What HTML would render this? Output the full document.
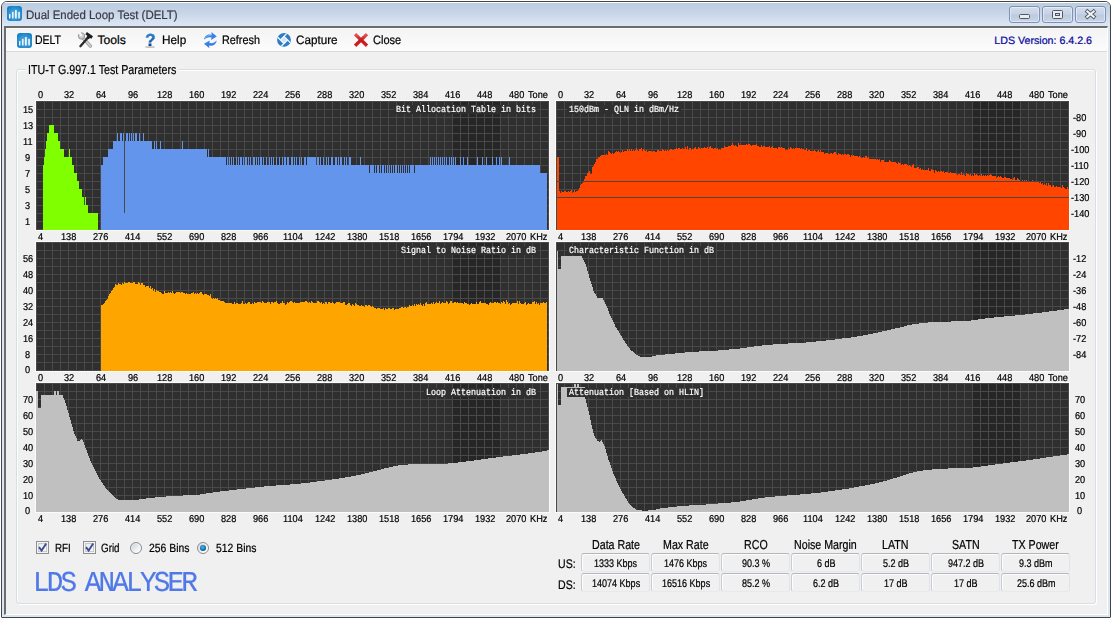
<!DOCTYPE html>
<html lang="en"><head><meta charset="utf-8"><title>Dual Ended Loop Test (DELT)</title>
<style>
html,body{margin:0;padding:0;background:#fff;}
body{width:1112px;height:620px;position:relative;overflow:hidden;font-family:"Liberation Sans",sans-serif;}
.t{position:absolute;white-space:nowrap;transform-origin:0 0;text-rendering:geometricPrecision;-webkit-text-stroke:0.22px;}
.s{font-family:"Liberation Sans",sans-serif;}
.m{font-family:"Liberation Mono",monospace;}
.abs{position:absolute;}
#win{position:absolute;left:1px;top:1px;width:1108px;height:615px;border:1px solid #444;border-radius:6px 6px 1px 1px;
 background:#dbe6f4;overflow:hidden;}
#titlebar{position:absolute;left:0;top:0;width:1108px;height:25px;
 background:linear-gradient(#ffffff 0,#ffffff 1px,#bccde0 1px,#c4d3e5 9px,#d6e2f1 20px,#dce7f5 24px);}
#inner{position:absolute;left:2px;top:24px;width:1101px;height:586px;background:#f0f0f0;
 border-left:2px solid #6d6d6d;border-top:2px solid #6b6b6b;border-right:1px solid #fff;border-bottom:1px solid #fff;}
#toolbar{position:absolute;left:6px;top:28px;width:1101px;height:23px;background:linear-gradient(#ffffff 0,#f4f4f4 1px,#f6f6f6 8px,#fcfcfc 22px);border-bottom:1px solid #dadada;}
#group{position:absolute;left:16px;top:69px;width:1078px;height:533px;border:1px solid #d5dfe5;border-radius:3px;box-shadow:inset 1px 1px 0 #fff,1px 1px 0 #fff;}
.wb{position:absolute;top:6px;height:15px;width:29px;border:1px solid #8190b2;border-radius:3px;
 background:linear-gradient(#d3deec 0,#c6d3e5 48%,#bccadf 52%,#c7d5e7 100%);box-shadow:inset 0 0 0 1px rgba(255,255,255,.45);}
.cell{position:absolute;width:67px;height:17px;border:1px solid;border-color:#b3b6bc #e0e3e8 #e6e9ee #c9cdd5;border-radius:3px;background:#f0f0f0;box-shadow:inset 1px 1px 0 #fdfdfd;}
.cb{position:absolute;width:11px;height:11px;border:1px solid #8e8f8f;background:linear-gradient(135deg,#dfe2e6,#f6f6f6 60%,#fff);box-shadow:inset 0 0 0 1px #f4f4f4, inset 0 0 0 2px #c6cad0;}
.rb{position:absolute;width:10px;height:10px;border:1px solid #8a8b8c;border-radius:50%;background:linear-gradient(135deg,#cfd3d8 10%,#eceef0 55%,#ffffff 90%);box-shadow:inset 0 0 0 1px rgba(255,255,255,.5);}
</style></head><body>

<div id="win"><div id="titlebar"></div><div id="inner"></div></div>
<div id="toolbar"></div>
<div id="group"></div>
<div class="abs" style="left:26px;top:62px;width:153px;height:16px;background:#f0f0f0"></div>
<div class="wb" style="left:1009px"></div>
<div class="wb" style="left:1042px"></div>
<div class="wb" style="left:1075px"></div>
<svg class="abs" style="left:6.8px;top:6.4px" width="15" height="15" viewBox="0 0 15 15">
<defs><radialGradient id="ig1" cx="50%" cy="55%" r="60%"><stop offset="0" stop-color="#62b2e4"/><stop offset="1" stop-color="#1280c6"/></radialGradient></defs>
<rect x="0" y="0" width="15" height="15" rx="3.2" fill="url(#ig1)"/>
<rect x="2" y="7.9" width="1.4" height="4.7" rx=".6" fill="#fff"/><rect x="5.1" y="5.8" width="1.4" height="6.8" rx=".6" fill="#fff"/>
<rect x="8.1" y="3.9" width="1.6" height="8.7" rx=".6" fill="#fff"/><rect x="11.3" y="5.8" width="1.5" height="6.8" rx=".6" fill="#fff"/></svg>
<svg class="abs" style="left:16.7px;top:32.5px" width="15" height="15" viewBox="0 0 15 15">
<defs><radialGradient id="ig2" cx="50%" cy="55%" r="60%"><stop offset="0" stop-color="#62b2e4"/><stop offset="1" stop-color="#1280c6"/></radialGradient></defs>
<rect x="0" y="0" width="15" height="15" rx="3.2" fill="url(#ig2)"/>
<rect x="2" y="7.9" width="1.4" height="4.7" rx=".6" fill="#fff"/><rect x="5.1" y="5.8" width="1.4" height="6.8" rx=".6" fill="#fff"/>
<rect x="8.1" y="3.9" width="1.6" height="8.7" rx=".6" fill="#fff"/><rect x="11.3" y="5.8" width="1.5" height="6.8" rx=".6" fill="#fff"/></svg>
<div class="t s" style="left:26.00px;top:6px;font-size:12.2px;line-height:18px;color:#3a3a44;transform:scaleX(0.9392);">Dual Ended Loop Test (DELT)</div>
<svg class="abs" style="left:1009px;top:6px" width="100" height="18" viewBox="0 0 100 18" shape-rendering="geometricPrecision">
<rect x="10.5" y="8.5" width="10" height="4" rx="1" fill="#ececec" stroke="#4f5868" stroke-width="1"/>
<rect x="43.5" y="4.5" width="10" height="8" rx="1" fill="#ececec" stroke="#4f5868" stroke-width="1"/>
<rect x="46.5" y="7.5" width="4" height="2" fill="#cfdbea" stroke="#4f5868" stroke-width="1"/>
<g fill="none" stroke-linecap="butt"><path d="M76.9 4.2 L86.1 12 M86.1 4.2 L76.9 12" stroke="#4f5868" stroke-width="3.9"/><path d="M77.5 4.7 L85.5 11.5 M85.5 4.7 L77.5 11.5" stroke="#f4f4f4" stroke-width="2.1"/></g>
</svg>
<svg class="abs" style="left:77px;top:31px" width="17" height="17" viewBox="0 0 17 17">
<path d="M5.6 6.4 L13.4 15.1" stroke="#8d8d8d" stroke-width="3.3" stroke-linecap="round"/>
<path d="M5.6 6.4 L13.4 15.1" stroke="#cfcfcf" stroke-width="2.1" stroke-linecap="round"/>
<circle cx="4.5" cy="5" r="3.2" fill="#c9c9c9" stroke="#8d8d8d" stroke-width=".8"/>
<path d="M4.6 5.2 L2.0 0.6" stroke="#f6f6f6" stroke-width="2.3"/>
<path d="M3.4 15.2 l8.7 -10" stroke="#2a2a2a" stroke-width="2.3" stroke-linecap="round"/>
<path d="M9.9 1.0 l6.1 4.3 -1.6 2.5 -1.5 -.7 -1.1 1.2 -2.4 -1.9 1 -1.3 -2 -1.9z" fill="#1f1f1f"/>
</svg>
<div class="t s" style="left:145.00px;top:28px;font-size:17.5px;line-height:24px;color:#1c62b8;font-weight:bold;background:linear-gradient(#2a86d6 25%,#1a5fb4 55%,#12357e 80%);-webkit-background-clip:text;background-clip:text;-webkit-text-fill-color:transparent;-webkit-text-stroke:0.2px #1e62b8;">?</div>
<div class="abs" style="left:145px;top:45.6px;width:10px;height:2.4px;border-radius:50%;background:rgba(60,60,60,.28);filter:blur(.6px)"></div>
<svg class="abs" style="left:203px;top:31px" width="15" height="18" viewBox="0 0 15 18">
<path d="M1.0 8.6 C1.6 4.2 5.8 2.6 8.8 3.8 L8.4 0.9 13.8 5.6 8.0 9.0 8.5 6.6 C5.8 5.6 3.2 6.6 1.0 8.6z" fill="#3681e8"/>
<path d="M13.8 9.6 C13.0 14.2 8.8 15.6 6.0 14.4 L6.4 17.2 1.0 12.8 6.8 9.4 6.3 11.8 C8.8 12.8 11.6 11.8 13.8 9.6z" fill="#3681e8"/>
<path d="M2.2 7 C3.4 4.6 6.4 4 8.8 4.8" stroke="#7fb4f6" stroke-width=".9" fill="none"/>
</svg>
<svg class="abs" style="left:276px;top:32px" width="16" height="16" viewBox="0 0 16 16">
<defs><clipPath id="cc"><circle cx="8" cy="7.9" r="6.9"/></clipPath></defs>
<circle cx="8" cy="7.9" r="7.5" fill="#f7f8fa"/>
<circle cx="8" cy="7.9" r="6.9" fill="#2c7cc6"/>
<path d="M8 4.3 L11.6 7.9 8 11.5 4.4 7.9z" fill="#cbe6fb"/>
<g stroke="#f3f5f8" stroke-width="1.3" clip-path="url(#cc)" stroke-linecap="butt"><path d="M4.2 8.1 L12.4 -0.1"/><path d="M7.8 4.1 L15.8 12.1"/><path d="M11.8 7.7 L3.4 16.1"/><path d="M8.2 11.7 L0.2 3.7"/></g>
</svg>
<svg class="abs" style="left:353px;top:32px" width="16" height="16" viewBox="0 0 16 16">
<defs><linearGradient id="rx" x1="0" y1="0" x2="0" y2="1"><stop offset="0" stop-color="#e45c5c"/><stop offset=".5" stop-color="#c51a1a"/><stop offset="1" stop-color="#d61c1c"/></linearGradient></defs>
<g stroke="url(#rx)" stroke-width="3.3" fill="none"><path d="M2.07 2.07 L14.03 13.73"/><path d="M14.03 2.07 L2.07 13.73"/></g>
</svg>
<div class="t s" style="left:34.90px;top:31px;font-size:12.2px;line-height:18px;color:#000;transform:scaleX(0.8587);">DELT</div>
<div class="t s" style="left:97.40px;top:31px;font-size:12.2px;line-height:18px;color:#000;">Tools</div>
<div class="t s" style="left:161.60px;top:31px;font-size:12.2px;line-height:18px;color:#000;transform:scaleX(0.9685);">Help</div>
<div class="t s" style="left:221.80px;top:31px;font-size:12.2px;line-height:18px;color:#000;transform:scaleX(0.8896);">Refresh</div>
<div class="t s" style="left:295.50px;top:31px;font-size:12.2px;line-height:18px;color:#000;transform:scaleX(0.9585);">Capture</div>
<div class="t s" style="left:372.90px;top:31px;font-size:12.2px;line-height:18px;color:#000;transform:scaleX(0.9041);">Close</div>
<div class="t s" style="left:994.30px;top:33px;font-size:10.67px;line-height:16px;color:#0808a0;">LDS Version: 6.4.2.6</div>
<div class="t s" style="left:28.40px;top:60px;font-size:13px;line-height:19px;color:#000;transform:scaleX(0.8200);">ITU-T G.997.1 Test Parameters</div>
<svg class="abs" style="left:0;top:0" width="1112" height="620" viewBox="0 0 1112 620" shape-rendering="crispEdges">
<defs><pattern id="grid" width="8" height="8" patternUnits="userSpaceOnUse"><rect width="8" height="8" fill="none"/><rect width="1" height="8" fill="#494949"/><rect width="8" height="1" fill="#494949"/></pattern></defs>
<rect x="35" y="100" width="515" height="131" fill="#fbfbfb"/>
<rect x="36" y="101" width="513" height="129" fill="#2f2f2f"/>
<rect x="453" y="101" width="47" height="129" fill="#262626"/>
<g transform="translate(36,101)"><rect x="0" y="0" width="513" height="129" fill="url(#grid)"/></g>
<rect x="555" y="100" width="515" height="131" fill="#fbfbfb"/>
<rect x="556" y="101" width="513" height="129" fill="#2f2f2f"/>
<rect x="973" y="101" width="47" height="129" fill="#262626"/>
<g transform="translate(556,101)"><rect x="0" y="0" width="513" height="129" fill="url(#grid)"/></g>
<rect x="35" y="241" width="515" height="131" fill="#fbfbfb"/>
<rect x="36" y="242" width="513" height="129" fill="#2f2f2f"/>
<rect x="453" y="242" width="47" height="129" fill="#262626"/>
<g transform="translate(36,242)"><rect x="0" y="0" width="513" height="129" fill="url(#grid)"/></g>
<rect x="555" y="241" width="515" height="131" fill="#fbfbfb"/>
<rect x="556" y="242" width="513" height="129" fill="#2f2f2f"/>
<rect x="973" y="242" width="47" height="129" fill="#262626"/>
<g transform="translate(556,242)"><rect x="0" y="0" width="513" height="129" fill="url(#grid)"/></g>
<rect x="35" y="382" width="515" height="131" fill="#fbfbfb"/>
<rect x="36" y="383" width="513" height="129" fill="#2f2f2f"/>
<rect x="453" y="383" width="47" height="129" fill="#262626"/>
<g transform="translate(36,383)"><rect x="0" y="0" width="513" height="129" fill="url(#grid)"/></g>
<rect x="555" y="382" width="515" height="131" fill="#fbfbfb"/>
<rect x="556" y="383" width="513" height="129" fill="#2f2f2f"/>
<rect x="973" y="383" width="47" height="129" fill="#262626"/>
<g transform="translate(556,383)"><rect x="0" y="0" width="513" height="129" fill="url(#grid)"/></g>
<path d="M43 230V165H44V157H45V149H46V141H47V133H49V125H54V133H58V141H60V149H64V157H69V149H70V157H72V165H74V173H77V181H79V189H82V197H84V205H85V197H86V205H88V213H98V230Z" fill="#7fff00"/>
<path d="M101 230V165H103V157H108V149H113V141H117V133H118V141H120V133H122V141H123V133H124V213H125V141H126V133H128V141H129V133H130V141H131V133H132V141H133V133H134V141H135V133H137V141H139V133H140V141H143V133H144V141H152V149H154V141H155V149H156V141H157V149H160V141H161V149H182V141H183V149H207V157H208V149H209V157H226V165H227V157H228V165H229V157H230V165H231V157H232V165H233V157H234V165H236V157H237V165H238V157H239V165H240V157H242V165H243V157H244V165H245V157H247V165H248V157H249V165H250V157H251V165H253V157H255V165H256V157H257V165H258V157H259V165H260V157H262V165H263V157H264V165H266V157H267V165H269V157H270V165H271V157H272V165H273V157H274V165H276V157H277V165H279V157H280V165H282V157H283V165H284V157H286V165H287V157H289V165H291V157H293V165H294V157H295V165H296V157H297V165H299V157H300V165H301V157H302V165H304V157H306V165H307V157H316V165H317V157H319V165H320V157H321V165H323V157H324V165H326V157H327V165H328V157H329V165H331V157H333V165H335V157H337V165H338V157H339V165H340V157H342V165H344V157H345V165H346V157H347V165H349V157H351V165H360V157H361V165H369V173H370V165H374V173H375V165H376V173H377V165H379V173H380V165H381V173H382V165H384V173H385V165H386V173H387V165H388V173H389V165H390V173H391V165H392V173H393V165H394V173H395V165H397V173H398V165H399V173H400V165H401V173H402V165H403V173H404V165H405V173H406V165H407V173H408V165H409V173H410V165H414V173H415V165H430V157H431V165H432V157H433V165H434V157H435V165H436V157H437V165H438V157H439V165H440V157H441V165H442V157H443V165H444V157H445V165H446V157H447V165H449V157H450V165H451V157H452V165H453V157H454V165H455V157H456V165H460V157H461V165H463V157H464V165H467V157H468V165H477V157H478V165H482V157H483V165H486V157H487V165H492V157H493V165H496V157H497V165H499V157H500V165H501V157H502V165H509V157H510V165H540V173H547V230Z" fill="#6495ed"/>
<path d="M557 230V157H559V191H560V193H561V191H562V192H564V191H566V192H568V191H569V192H570V191H571V190H572V193H573V192H574V190H575V192H576V191H578V190H579V188H580V185H581V184H582V183H583V181H584V179H585V176H587V173H588V172H589V171H590V174H592V167H593V166H594V164H595V162H596V159H598V157H600V156H601V155H606V154H607V155H608V151H609V152H610V153H611V154H612V153H613V154H614V153H615V152H616V151H617V152H618V151H619V152H620V153H621V152H622V150H623V152H624V151H627V149H628V151H629V149H630V151H631V149H632V151H633V150H634V151H635V150H636V148H637V150H638V151H639V149H641V148H642V151H643V149H644V150H645V151H646V150H647V152H648V151H652V152H653V151H655V152H657V150H659V151H662V149H663V150H664V151H665V150H666V151H667V150H668V151H669V150H670V149H672V150H674V149H676V148H677V149H678V148H680V149H682V148H683V149H685V147H686V149H687V146H688V150H689V148H691V150H692V149H694V148H695V147H696V149H698V147H699V148H700V149H701V148H704V147H705V148H707V147H708V149H709V147H710V146H711V148H713V149H714V148H716V149H717V148H718V150H719V149H720V150H721V148H724V146H725V147H728V146H731V145H732V143H733V145H734V146H735V145H736V146H737V147H738V143H739V145H746V144H747V145H748V144H750V145H751V146H752V145H756V144H757V146H759V147H761V145H762V147H763V146H765V147H769V146H770V148H771V147H772V146H773V148H777V149H778V147H780V148H781V147H782V148H785V150H788V148H789V149H790V147H791V148H792V149H793V148H794V149H795V148H800V149H801V148H802V149H804V150H806V148H807V151H808V150H810V151H814V150H815V151H816V152H817V151H818V150H819V152H820V150H821V152H824V154H825V153H828V154H830V153H832V154H833V153H834V152H836V154H837V155H838V153H839V154H841V155H842V154H843V155H844V154H846V155H847V154H849V155H850V157H851V155H852V156H853V155H854V156H858V157H859V156H860V157H861V158H863V157H864V158H865V156H867V158H868V157H869V159H876V160H877V159H878V160H879V159H880V162H881V160H884V162H889V160H890V161H891V162H896V163H897V164H898V162H899V163H901V165H902V164H903V165H904V164H907V165H908V166H909V165H910V166H911V167H912V165H913V164H914V168H917V167H919V169H920V168H921V170H922V169H923V170H928V168H929V171H931V169H932V170H934V173H935V170H936V171H937V172H938V171H939V172H940V171H942V172H943V171H944V173H945V172H948V173H950V172H951V173H956V174H957V175H958V174H960V175H961V172H962V175H963V174H964V175H965V176H966V173H967V174H969V175H970V174H971V176H972V175H973V176H974V173H975V175H976V174H977V175H978V176H979V175H980V176H981V174H982V176H983V175H984V176H985V175H986V176H987V175H988V176H989V175H990V174H991V175H992V176H996V178H997V177H998V176H999V177H1000V176H1001V177H1002V178H1004V177H1006V178H1010V179H1012V180H1013V178H1014V177H1015V180H1017V178H1018V179H1019V180H1020V181H1022V180H1023V181H1024V180H1025V181H1026V180H1027V181H1031V182H1032V180H1033V182H1039V183H1040V182H1041V184H1042V183H1043V185H1044V184H1045V185H1046V183H1047V186H1048V183H1049V185H1051V187H1052V186H1053V185H1054V187H1056V186H1057V187H1061V188H1062V185H1063V187H1064V188H1065V189H1067V187H1068V189H1069V230Z" fill="#ff4500"/>
<rect x="557" y="181" width="512" height="1" fill="#484848"/><rect x="557" y="197" width="512" height="1" fill="#484848"/>
<path d="M101 371V305H103V304H104V303H105V301H106V300H107V299H108V296H109V294H110V293H111V291H112V290H113V288H114V287H115V284H116V285H118V283H119V284H121V285H122V283H123V284H124V282H125V283H128V282H130V283H133V282H135V284H138V282H139V283H140V285H141V283H143V285H145V287H146V286H149V288H150V286H151V289H152V288H153V291H154V289H155V292H156V290H157V291H159V292H161V293H162V294H164V291H165V293H168V292H169V293H170V292H171V293H172V291H173V293H174V294H175V293H176V292H180V293H181V292H183V293H185V294H186V293H187V294H191V293H193V292H194V294H195V293H196V294H197V293H198V294H199V293H200V292H202V294H203V295H204V294H207V295H209V296H210V294H211V298H212V299H213V298H214V299H215V298H216V299H217V298H218V300H220V301H224V302H225V303H232V304H234V302H235V304H236V303H238V304H241V303H242V301H243V304H245V303H246V304H247V303H248V302H250V304H252V303H253V304H254V302H255V303H257V302H261V303H262V301H263V302H264V303H267V302H270V304H271V302H273V303H274V302H276V301H277V303H278V304H280V303H282V301H283V303H285V305H286V304H287V302H288V303H289V302H290V301H292V302H293V303H294V302H295V303H300V302H305V301H307V302H308V303H309V302H310V303H311V301H312V302H313V303H317V301H319V302H320V303H321V302H322V304H323V303H324V304H325V302H327V304H328V302H330V303H332V302H333V303H334V304H335V303H336V302H340V303H343V302H345V305H347V304H348V303H350V305H351V306H352V304H353V305H354V306H355V303H356V304H357V305H359V306H361V305H362V306H364V307H365V305H367V306H368V305H370V306H371V307H372V306H373V307H374V308H376V309H377V308H380V309H383V308H384V310H385V308H386V309H388V308H390V309H392V308H394V310H395V309H399V308H401V307H403V308H404V307H406V308H407V307H409V305H410V306H412V305H413V306H414V304H415V306H416V304H417V305H418V304H419V305H420V303H421V305H422V306H423V304H424V306H425V303H426V302H427V304H431V303H432V304H433V302H434V304H435V303H436V302H437V303H439V301H440V304H441V303H442V302H443V303H446V301H447V302H448V304H449V303H450V301H452V303H454V302H456V303H457V302H458V303H463V304H464V302H465V303H467V304H469V305H470V304H471V303H472V304H476V302H477V304H479V302H480V301H481V303H486V304H488V305H489V303H490V302H491V303H494V302H496V303H497V302H498V303H500V304H501V302H502V303H503V301H504V302H505V304H506V300H507V302H508V304H509V303H510V305H511V304H512V303H517V301H518V304H519V301H520V303H521V304H524V303H525V302H526V305H527V304H528V303H529V304H532V302H534V301H535V304H536V302H537V304H538V303H539V305H540V303H543V302H544V303H546V302H547V371Z" fill="#ffa500"/>
<path d="M557 371V251H558V269H561V256H582V258H583V260H584V262H585V264H586V267H587V271H588V274H589V278H590V281H591V284H592V287H593V291H594V293H595V294H596V296H597V298H603V300H604V302H605V304H606V306H607V308H608V311H609V314H610V316H611V318H612V320H613V322H614V324H615V327H616V328H617V330H618V331H619V333H620V335H621V336H622V338H623V340H624V341H625V343H626V344H627V346H628V347H629V348H630V350H631V351H633V352H634V353H635V354H636V355H638V356H640V357H652V356H656V355H665V354H675V353H685V352H699V351H718V350H729V349H740V348H747V347H754V346H762V345H773V344H788V343H806V342H816V341H826V340H835V339H842V338H851V337H857V336H863V335H868V334H873V333H878V332H882V331H887V330H891V329H895V328H900V327H904V326H907V325H912V324H919V323H928V322H951V321H971V320H978V319H985V318H994V317H1004V316H1015V315H1025V314H1033V313H1042V312H1049V311H1057V310H1064V309H1069V371Z" fill="#c0c0c0"/>
<path d="M36 512V391H38V408H41V395H54V391H56V395H57V391H59V395H63V398H64V400H65V403H66V406H67V410H68V413H69V417H70V420H71V424H72V427H73V431H74V434H75V436H76V438H77V441H80V440H81V439H82V440H83V442H84V445H85V448H86V450H87V453H88V456H89V458H90V461H91V463H92V465H93V467H94V469H95V471H96V473H97V475H98V477H99V479H100V480H101V482H102V483H103V485H104V486H105V488H106V489H107V490H108V491H109V492H110V493H111V494H112V495H113V496H114V497H115V498H116V499H118V500H139V499H146V498H155V497H166V496H183V495H200V494H206V493H213V492H220V491H229V490H237V489H246V488H255V487H264V486H276V485H290V484H301V483H310V482H317V481H325V480H332V479H339V478H345V477H351V476H356V475H361V474H365V473H369V472H373V471H377V470H381V469H384V468H389V467H393V466H398V465H408V464H448V463H458V462H466V461H474V460H481V459H488V458H496V457H503V456H512V455H520V454H528V453H535V452H542V451H547V450H549V512Z" fill="#c0c0c0"/>
<path d="M557 512V384H558V405H561V387H574V384H576V387H577V384H579V387H585V399H586V403H587V407H588V411H589V415H590V420H591V425H592V429H593V433H594V436H595V438H596V439H597V441H599V442H600V441H601V440H602V442H603V444H604V446H605V449H606V453H607V456H608V460H609V462H610V465H611V468H612V471H613V474H614V476H615V478H616V481H617V483H618V485H619V487H620V489H621V491H622V493H623V494H624V496H625V498H626V499H627V501H628V503H629V504H630V505H631V506H632V507H633V508H635V509H636V510H642V511H648V510H656V509H660V508H668V507H677V506H689V505H706V504H718V503H731V502H740V501H746V500H752V499H758V498H765V497H775V496H787V495H800V494H811V493H821V492H828V491H835V490H842V489H849V488H854V487H859V486H865V485H870V484H875V483H879V482H883V481H887V480H890V479H893V478H897V477H900V476H903V475H906V474H909V473H913V472H917V471H923V470H932V469H948V468H973V467H981V466H988V465H995V464H1003V463H1010V462H1018V461H1026V460H1033V459H1040V458H1046V457H1053V456H1060V455H1067V454H1069V512Z" fill="#c0c0c0"/>
<rect x="394" y="105" width="144" height="9" fill="#2f2f2f"/>
<rect x="567" y="105" width="114" height="9" fill="#2f2f2f"/>
<rect x="399" y="246" width="139" height="9" fill="#2f2f2f"/>
<rect x="567" y="246" width="149" height="9" fill="#2f2f2f"/>
<rect x="424" y="388" width="114" height="9" fill="#2f2f2f"/>
<rect x="567" y="388" width="139" height="9" fill="#2f2f2f"/>
</svg>
<div class="t m" style="left:396.00px;top:102px;font-size:9.5px;line-height:15px;color:#ffffff;transform:scaleX(0.8771);">Bit Allocation Table in bits</div>
<div class="t m" style="left:569.00px;top:102px;font-size:9.5px;line-height:15px;color:#ffffff;transform:scaleX(0.8771);">150dBm - QLN in dBm/Hz</div>
<div class="t m" style="left:401.00px;top:243px;font-size:9.5px;line-height:15px;color:#ffffff;transform:scaleX(0.8771);">Signal to Noise Ratio in dB</div>
<div class="t m" style="left:569.00px;top:243px;font-size:9.5px;line-height:15px;color:#ffffff;transform:scaleX(0.8771);">Characteristic Function in dB</div>
<div class="t m" style="left:426.00px;top:385px;font-size:9.5px;line-height:15px;color:#ffffff;transform:scaleX(0.8771);">Loop Attenuation in dB</div>
<div class="t m" style="left:569.00px;top:385px;font-size:9.5px;line-height:15px;color:#ffffff;transform:scaleX(0.8771);">Attenuation [Based on HLIN]</div>
<div class="t s" style="left:38.00px;top:88px;font-size:10.0px;line-height:15px;color:#000;transform:scaleX(0.9200);">0</div>
<div class="t s" style="left:63.88px;top:88px;font-size:10.0px;line-height:15px;color:#000;transform:scaleX(0.9200);">32</div>
<div class="t s" style="left:95.88px;top:88px;font-size:10.0px;line-height:15px;color:#000;transform:scaleX(0.9200);">64</div>
<div class="t s" style="left:127.88px;top:88px;font-size:10.0px;line-height:15px;color:#000;transform:scaleX(0.9200);">96</div>
<div class="t s" style="left:157.33px;top:88px;font-size:10.0px;line-height:15px;color:#000;transform:scaleX(0.9200);">128</div>
<div class="t s" style="left:189.33px;top:88px;font-size:10.0px;line-height:15px;color:#000;transform:scaleX(0.9200);">160</div>
<div class="t s" style="left:221.33px;top:88px;font-size:10.0px;line-height:15px;color:#000;transform:scaleX(0.9200);">192</div>
<div class="t s" style="left:253.33px;top:88px;font-size:10.0px;line-height:15px;color:#000;transform:scaleX(0.9200);">224</div>
<div class="t s" style="left:285.33px;top:88px;font-size:10.0px;line-height:15px;color:#000;transform:scaleX(0.9200);">256</div>
<div class="t s" style="left:317.33px;top:88px;font-size:10.0px;line-height:15px;color:#000;transform:scaleX(0.9200);">288</div>
<div class="t s" style="left:349.33px;top:88px;font-size:10.0px;line-height:15px;color:#000;transform:scaleX(0.9200);">320</div>
<div class="t s" style="left:381.33px;top:88px;font-size:10.0px;line-height:15px;color:#000;transform:scaleX(0.9200);">352</div>
<div class="t s" style="left:413.33px;top:88px;font-size:10.0px;line-height:15px;color:#000;transform:scaleX(0.9200);">384</div>
<div class="t s" style="left:445.33px;top:88px;font-size:10.0px;line-height:15px;color:#000;transform:scaleX(0.9200);">416</div>
<div class="t s" style="left:477.33px;top:88px;font-size:10.0px;line-height:15px;color:#000;transform:scaleX(0.9200);">448</div>
<div class="t s" style="left:509.33px;top:88px;font-size:10.0px;line-height:15px;color:#000;transform:scaleX(0.9200);">480</div>
<div class="t s" style="left:527.55px;top:88px;font-size:10.0px;line-height:15px;color:#000;transform:scaleX(0.9200);">Tone</div>
<div class="t s" style="left:38.00px;top:230px;font-size:10.0px;line-height:15px;color:#000;transform:scaleX(0.9200);">4</div>
<div class="t s" style="left:61.33px;top:230px;font-size:10.0px;line-height:15px;color:#000;transform:scaleX(0.9200);">138</div>
<div class="t s" style="left:93.33px;top:230px;font-size:10.0px;line-height:15px;color:#000;transform:scaleX(0.9200);">276</div>
<div class="t s" style="left:125.33px;top:230px;font-size:10.0px;line-height:15px;color:#000;transform:scaleX(0.9200);">414</div>
<div class="t s" style="left:157.33px;top:230px;font-size:10.0px;line-height:15px;color:#000;transform:scaleX(0.9200);">552</div>
<div class="t s" style="left:189.33px;top:230px;font-size:10.0px;line-height:15px;color:#000;transform:scaleX(0.9200);">690</div>
<div class="t s" style="left:221.33px;top:230px;font-size:10.0px;line-height:15px;color:#000;transform:scaleX(0.9200);">828</div>
<div class="t s" style="left:253.33px;top:230px;font-size:10.0px;line-height:15px;color:#000;transform:scaleX(0.9200);">966</div>
<div class="t s" style="left:283.11px;top:230px;font-size:10.0px;line-height:15px;color:#000;transform:scaleX(0.9200);">1104</div>
<div class="t s" style="left:314.77px;top:230px;font-size:10.0px;line-height:15px;color:#000;transform:scaleX(0.9200);">1242</div>
<div class="t s" style="left:346.77px;top:230px;font-size:10.0px;line-height:15px;color:#000;transform:scaleX(0.9200);">1380</div>
<div class="t s" style="left:378.77px;top:230px;font-size:10.0px;line-height:15px;color:#000;transform:scaleX(0.9200);">1518</div>
<div class="t s" style="left:410.77px;top:230px;font-size:10.0px;line-height:15px;color:#000;transform:scaleX(0.9200);">1656</div>
<div class="t s" style="left:442.77px;top:230px;font-size:10.0px;line-height:15px;color:#000;transform:scaleX(0.9200);">1794</div>
<div class="t s" style="left:474.77px;top:230px;font-size:10.0px;line-height:15px;color:#000;transform:scaleX(0.9200);">1932</div>
<div class="t s" style="left:506.27px;top:230px;font-size:10.0px;line-height:15px;color:#000;transform:scaleX(0.9200);">2070</div>
<div class="t s" style="left:530.12px;top:230px;font-size:10.0px;line-height:15px;color:#000;transform:scaleX(0.9200);">KHz</div>
<div class="t s" style="left:38.00px;top:371px;font-size:10.0px;line-height:15px;color:#000;transform:scaleX(0.9200);">0</div>
<div class="t s" style="left:63.88px;top:371px;font-size:10.0px;line-height:15px;color:#000;transform:scaleX(0.9200);">32</div>
<div class="t s" style="left:95.88px;top:371px;font-size:10.0px;line-height:15px;color:#000;transform:scaleX(0.9200);">64</div>
<div class="t s" style="left:127.88px;top:371px;font-size:10.0px;line-height:15px;color:#000;transform:scaleX(0.9200);">96</div>
<div class="t s" style="left:157.33px;top:371px;font-size:10.0px;line-height:15px;color:#000;transform:scaleX(0.9200);">128</div>
<div class="t s" style="left:189.33px;top:371px;font-size:10.0px;line-height:15px;color:#000;transform:scaleX(0.9200);">160</div>
<div class="t s" style="left:221.33px;top:371px;font-size:10.0px;line-height:15px;color:#000;transform:scaleX(0.9200);">192</div>
<div class="t s" style="left:253.33px;top:371px;font-size:10.0px;line-height:15px;color:#000;transform:scaleX(0.9200);">224</div>
<div class="t s" style="left:285.33px;top:371px;font-size:10.0px;line-height:15px;color:#000;transform:scaleX(0.9200);">256</div>
<div class="t s" style="left:317.33px;top:371px;font-size:10.0px;line-height:15px;color:#000;transform:scaleX(0.9200);">288</div>
<div class="t s" style="left:349.33px;top:371px;font-size:10.0px;line-height:15px;color:#000;transform:scaleX(0.9200);">320</div>
<div class="t s" style="left:381.33px;top:371px;font-size:10.0px;line-height:15px;color:#000;transform:scaleX(0.9200);">352</div>
<div class="t s" style="left:413.33px;top:371px;font-size:10.0px;line-height:15px;color:#000;transform:scaleX(0.9200);">384</div>
<div class="t s" style="left:445.33px;top:371px;font-size:10.0px;line-height:15px;color:#000;transform:scaleX(0.9200);">416</div>
<div class="t s" style="left:477.33px;top:371px;font-size:10.0px;line-height:15px;color:#000;transform:scaleX(0.9200);">448</div>
<div class="t s" style="left:509.33px;top:371px;font-size:10.0px;line-height:15px;color:#000;transform:scaleX(0.9200);">480</div>
<div class="t s" style="left:527.55px;top:371px;font-size:10.0px;line-height:15px;color:#000;transform:scaleX(0.9200);">Tone</div>
<div class="t s" style="left:38.00px;top:512px;font-size:10.0px;line-height:15px;color:#000;transform:scaleX(0.9200);">4</div>
<div class="t s" style="left:61.33px;top:512px;font-size:10.0px;line-height:15px;color:#000;transform:scaleX(0.9200);">138</div>
<div class="t s" style="left:93.33px;top:512px;font-size:10.0px;line-height:15px;color:#000;transform:scaleX(0.9200);">276</div>
<div class="t s" style="left:125.33px;top:512px;font-size:10.0px;line-height:15px;color:#000;transform:scaleX(0.9200);">414</div>
<div class="t s" style="left:157.33px;top:512px;font-size:10.0px;line-height:15px;color:#000;transform:scaleX(0.9200);">552</div>
<div class="t s" style="left:189.33px;top:512px;font-size:10.0px;line-height:15px;color:#000;transform:scaleX(0.9200);">690</div>
<div class="t s" style="left:221.33px;top:512px;font-size:10.0px;line-height:15px;color:#000;transform:scaleX(0.9200);">828</div>
<div class="t s" style="left:253.33px;top:512px;font-size:10.0px;line-height:15px;color:#000;transform:scaleX(0.9200);">966</div>
<div class="t s" style="left:283.11px;top:512px;font-size:10.0px;line-height:15px;color:#000;transform:scaleX(0.9200);">1104</div>
<div class="t s" style="left:314.77px;top:512px;font-size:10.0px;line-height:15px;color:#000;transform:scaleX(0.9200);">1242</div>
<div class="t s" style="left:346.77px;top:512px;font-size:10.0px;line-height:15px;color:#000;transform:scaleX(0.9200);">1380</div>
<div class="t s" style="left:378.77px;top:512px;font-size:10.0px;line-height:15px;color:#000;transform:scaleX(0.9200);">1518</div>
<div class="t s" style="left:410.77px;top:512px;font-size:10.0px;line-height:15px;color:#000;transform:scaleX(0.9200);">1656</div>
<div class="t s" style="left:442.77px;top:512px;font-size:10.0px;line-height:15px;color:#000;transform:scaleX(0.9200);">1794</div>
<div class="t s" style="left:474.77px;top:512px;font-size:10.0px;line-height:15px;color:#000;transform:scaleX(0.9200);">1932</div>
<div class="t s" style="left:506.27px;top:512px;font-size:10.0px;line-height:15px;color:#000;transform:scaleX(0.9200);">2070</div>
<div class="t s" style="left:530.12px;top:512px;font-size:10.0px;line-height:15px;color:#000;transform:scaleX(0.9200);">KHz</div>
<div class="t s" style="left:558.00px;top:88px;font-size:10.0px;line-height:15px;color:#000;transform:scaleX(0.9200);">0</div>
<div class="t s" style="left:583.88px;top:88px;font-size:10.0px;line-height:15px;color:#000;transform:scaleX(0.9200);">32</div>
<div class="t s" style="left:615.88px;top:88px;font-size:10.0px;line-height:15px;color:#000;transform:scaleX(0.9200);">64</div>
<div class="t s" style="left:647.88px;top:88px;font-size:10.0px;line-height:15px;color:#000;transform:scaleX(0.9200);">96</div>
<div class="t s" style="left:677.33px;top:88px;font-size:10.0px;line-height:15px;color:#000;transform:scaleX(0.9200);">128</div>
<div class="t s" style="left:709.33px;top:88px;font-size:10.0px;line-height:15px;color:#000;transform:scaleX(0.9200);">160</div>
<div class="t s" style="left:741.33px;top:88px;font-size:10.0px;line-height:15px;color:#000;transform:scaleX(0.9200);">192</div>
<div class="t s" style="left:773.33px;top:88px;font-size:10.0px;line-height:15px;color:#000;transform:scaleX(0.9200);">224</div>
<div class="t s" style="left:805.33px;top:88px;font-size:10.0px;line-height:15px;color:#000;transform:scaleX(0.9200);">256</div>
<div class="t s" style="left:837.33px;top:88px;font-size:10.0px;line-height:15px;color:#000;transform:scaleX(0.9200);">288</div>
<div class="t s" style="left:869.33px;top:88px;font-size:10.0px;line-height:15px;color:#000;transform:scaleX(0.9200);">320</div>
<div class="t s" style="left:901.33px;top:88px;font-size:10.0px;line-height:15px;color:#000;transform:scaleX(0.9200);">352</div>
<div class="t s" style="left:933.33px;top:88px;font-size:10.0px;line-height:15px;color:#000;transform:scaleX(0.9200);">384</div>
<div class="t s" style="left:965.33px;top:88px;font-size:10.0px;line-height:15px;color:#000;transform:scaleX(0.9200);">416</div>
<div class="t s" style="left:997.33px;top:88px;font-size:10.0px;line-height:15px;color:#000;transform:scaleX(0.9200);">448</div>
<div class="t s" style="left:1029.33px;top:88px;font-size:10.0px;line-height:15px;color:#000;transform:scaleX(0.9200);">480</div>
<div class="t s" style="left:1047.55px;top:88px;font-size:10.0px;line-height:15px;color:#000;transform:scaleX(0.9200);">Tone</div>
<div class="t s" style="left:558.00px;top:230px;font-size:10.0px;line-height:15px;color:#000;transform:scaleX(0.9200);">4</div>
<div class="t s" style="left:581.33px;top:230px;font-size:10.0px;line-height:15px;color:#000;transform:scaleX(0.9200);">138</div>
<div class="t s" style="left:613.33px;top:230px;font-size:10.0px;line-height:15px;color:#000;transform:scaleX(0.9200);">276</div>
<div class="t s" style="left:645.33px;top:230px;font-size:10.0px;line-height:15px;color:#000;transform:scaleX(0.9200);">414</div>
<div class="t s" style="left:677.33px;top:230px;font-size:10.0px;line-height:15px;color:#000;transform:scaleX(0.9200);">552</div>
<div class="t s" style="left:709.33px;top:230px;font-size:10.0px;line-height:15px;color:#000;transform:scaleX(0.9200);">690</div>
<div class="t s" style="left:741.33px;top:230px;font-size:10.0px;line-height:15px;color:#000;transform:scaleX(0.9200);">828</div>
<div class="t s" style="left:773.33px;top:230px;font-size:10.0px;line-height:15px;color:#000;transform:scaleX(0.9200);">966</div>
<div class="t s" style="left:803.11px;top:230px;font-size:10.0px;line-height:15px;color:#000;transform:scaleX(0.9200);">1104</div>
<div class="t s" style="left:834.77px;top:230px;font-size:10.0px;line-height:15px;color:#000;transform:scaleX(0.9200);">1242</div>
<div class="t s" style="left:866.77px;top:230px;font-size:10.0px;line-height:15px;color:#000;transform:scaleX(0.9200);">1380</div>
<div class="t s" style="left:898.77px;top:230px;font-size:10.0px;line-height:15px;color:#000;transform:scaleX(0.9200);">1518</div>
<div class="t s" style="left:930.77px;top:230px;font-size:10.0px;line-height:15px;color:#000;transform:scaleX(0.9200);">1656</div>
<div class="t s" style="left:962.77px;top:230px;font-size:10.0px;line-height:15px;color:#000;transform:scaleX(0.9200);">1794</div>
<div class="t s" style="left:994.77px;top:230px;font-size:10.0px;line-height:15px;color:#000;transform:scaleX(0.9200);">1932</div>
<div class="t s" style="left:1026.27px;top:230px;font-size:10.0px;line-height:15px;color:#000;transform:scaleX(0.9200);">2070</div>
<div class="t s" style="left:1050.12px;top:230px;font-size:10.0px;line-height:15px;color:#000;transform:scaleX(0.9200);">KHz</div>
<div class="t s" style="left:558.00px;top:371px;font-size:10.0px;line-height:15px;color:#000;transform:scaleX(0.9200);">0</div>
<div class="t s" style="left:583.88px;top:371px;font-size:10.0px;line-height:15px;color:#000;transform:scaleX(0.9200);">32</div>
<div class="t s" style="left:615.88px;top:371px;font-size:10.0px;line-height:15px;color:#000;transform:scaleX(0.9200);">64</div>
<div class="t s" style="left:647.88px;top:371px;font-size:10.0px;line-height:15px;color:#000;transform:scaleX(0.9200);">96</div>
<div class="t s" style="left:677.33px;top:371px;font-size:10.0px;line-height:15px;color:#000;transform:scaleX(0.9200);">128</div>
<div class="t s" style="left:709.33px;top:371px;font-size:10.0px;line-height:15px;color:#000;transform:scaleX(0.9200);">160</div>
<div class="t s" style="left:741.33px;top:371px;font-size:10.0px;line-height:15px;color:#000;transform:scaleX(0.9200);">192</div>
<div class="t s" style="left:773.33px;top:371px;font-size:10.0px;line-height:15px;color:#000;transform:scaleX(0.9200);">224</div>
<div class="t s" style="left:805.33px;top:371px;font-size:10.0px;line-height:15px;color:#000;transform:scaleX(0.9200);">256</div>
<div class="t s" style="left:837.33px;top:371px;font-size:10.0px;line-height:15px;color:#000;transform:scaleX(0.9200);">288</div>
<div class="t s" style="left:869.33px;top:371px;font-size:10.0px;line-height:15px;color:#000;transform:scaleX(0.9200);">320</div>
<div class="t s" style="left:901.33px;top:371px;font-size:10.0px;line-height:15px;color:#000;transform:scaleX(0.9200);">352</div>
<div class="t s" style="left:933.33px;top:371px;font-size:10.0px;line-height:15px;color:#000;transform:scaleX(0.9200);">384</div>
<div class="t s" style="left:965.33px;top:371px;font-size:10.0px;line-height:15px;color:#000;transform:scaleX(0.9200);">416</div>
<div class="t s" style="left:997.33px;top:371px;font-size:10.0px;line-height:15px;color:#000;transform:scaleX(0.9200);">448</div>
<div class="t s" style="left:1029.33px;top:371px;font-size:10.0px;line-height:15px;color:#000;transform:scaleX(0.9200);">480</div>
<div class="t s" style="left:1047.55px;top:371px;font-size:10.0px;line-height:15px;color:#000;transform:scaleX(0.9200);">Tone</div>
<div class="t s" style="left:558.00px;top:512px;font-size:10.0px;line-height:15px;color:#000;transform:scaleX(0.9200);">4</div>
<div class="t s" style="left:581.33px;top:512px;font-size:10.0px;line-height:15px;color:#000;transform:scaleX(0.9200);">138</div>
<div class="t s" style="left:613.33px;top:512px;font-size:10.0px;line-height:15px;color:#000;transform:scaleX(0.9200);">276</div>
<div class="t s" style="left:645.33px;top:512px;font-size:10.0px;line-height:15px;color:#000;transform:scaleX(0.9200);">414</div>
<div class="t s" style="left:677.33px;top:512px;font-size:10.0px;line-height:15px;color:#000;transform:scaleX(0.9200);">552</div>
<div class="t s" style="left:709.33px;top:512px;font-size:10.0px;line-height:15px;color:#000;transform:scaleX(0.9200);">690</div>
<div class="t s" style="left:741.33px;top:512px;font-size:10.0px;line-height:15px;color:#000;transform:scaleX(0.9200);">828</div>
<div class="t s" style="left:773.33px;top:512px;font-size:10.0px;line-height:15px;color:#000;transform:scaleX(0.9200);">966</div>
<div class="t s" style="left:803.11px;top:512px;font-size:10.0px;line-height:15px;color:#000;transform:scaleX(0.9200);">1104</div>
<div class="t s" style="left:834.77px;top:512px;font-size:10.0px;line-height:15px;color:#000;transform:scaleX(0.9200);">1242</div>
<div class="t s" style="left:866.77px;top:512px;font-size:10.0px;line-height:15px;color:#000;transform:scaleX(0.9200);">1380</div>
<div class="t s" style="left:898.77px;top:512px;font-size:10.0px;line-height:15px;color:#000;transform:scaleX(0.9200);">1518</div>
<div class="t s" style="left:930.77px;top:512px;font-size:10.0px;line-height:15px;color:#000;transform:scaleX(0.9200);">1656</div>
<div class="t s" style="left:962.77px;top:512px;font-size:10.0px;line-height:15px;color:#000;transform:scaleX(0.9200);">1794</div>
<div class="t s" style="left:994.77px;top:512px;font-size:10.0px;line-height:15px;color:#000;transform:scaleX(0.9200);">1932</div>
<div class="t s" style="left:1026.27px;top:512px;font-size:10.0px;line-height:15px;color:#000;transform:scaleX(0.9200);">2070</div>
<div class="t s" style="left:1050.12px;top:512px;font-size:10.0px;line-height:15px;color:#000;transform:scaleX(0.9200);">KHz</div>
<div class="t s" style="left:22.78px;top:103px;font-size:10.0px;line-height:15px;color:#000;transform:scaleX(0.9200);">15</div>
<div class="t s" style="left:22.78px;top:119px;font-size:10.0px;line-height:15px;color:#000;transform:scaleX(0.9200);">13</div>
<div class="t s" style="left:23.12px;top:135px;font-size:10.0px;line-height:15px;color:#000;transform:scaleX(0.9200);">11</div>
<div class="t s" style="left:25.34px;top:151px;font-size:10.0px;line-height:15px;color:#000;transform:scaleX(0.9200);">9</div>
<div class="t s" style="left:25.34px;top:167px;font-size:10.0px;line-height:15px;color:#000;transform:scaleX(0.9200);">7</div>
<div class="t s" style="left:25.34px;top:183px;font-size:10.0px;line-height:15px;color:#000;transform:scaleX(0.9200);">5</div>
<div class="t s" style="left:25.34px;top:199px;font-size:10.0px;line-height:15px;color:#000;transform:scaleX(0.9200);">3</div>
<div class="t s" style="left:25.34px;top:215px;font-size:10.0px;line-height:15px;color:#000;transform:scaleX(0.9200);">1</div>
<div class="t s" style="left:1073.35px;top:111px;font-size:10.0px;line-height:15px;color:#000;transform:scaleX(0.9200);">-80</div>
<div class="t s" style="left:1073.35px;top:127px;font-size:10.0px;line-height:15px;color:#000;transform:scaleX(0.9200);">-90</div>
<div class="t s" style="left:1070.79px;top:143px;font-size:10.0px;line-height:15px;color:#000;transform:scaleX(0.9200);">-100</div>
<div class="t s" style="left:1071.13px;top:159px;font-size:10.0px;line-height:15px;color:#000;transform:scaleX(0.9200);">-110</div>
<div class="t s" style="left:1070.79px;top:175px;font-size:10.0px;line-height:15px;color:#000;transform:scaleX(0.9200);">-120</div>
<div class="t s" style="left:1070.79px;top:191px;font-size:10.0px;line-height:15px;color:#000;transform:scaleX(0.9200);">-130</div>
<div class="t s" style="left:1070.79px;top:207px;font-size:10.0px;line-height:15px;color:#000;transform:scaleX(0.9200);">-140</div>
<div class="t s" style="left:22.78px;top:252px;font-size:10.0px;line-height:15px;color:#000;transform:scaleX(0.9200);">56</div>
<div class="t s" style="left:22.78px;top:268px;font-size:10.0px;line-height:15px;color:#000;transform:scaleX(0.9200);">48</div>
<div class="t s" style="left:22.78px;top:284px;font-size:10.0px;line-height:15px;color:#000;transform:scaleX(0.9200);">40</div>
<div class="t s" style="left:22.78px;top:300px;font-size:10.0px;line-height:15px;color:#000;transform:scaleX(0.9200);">32</div>
<div class="t s" style="left:22.78px;top:316px;font-size:10.0px;line-height:15px;color:#000;transform:scaleX(0.9200);">24</div>
<div class="t s" style="left:22.78px;top:332px;font-size:10.0px;line-height:15px;color:#000;transform:scaleX(0.9200);">16</div>
<div class="t s" style="left:25.34px;top:348px;font-size:10.0px;line-height:15px;color:#000;transform:scaleX(0.9200);">8</div>
<div class="t s" style="left:25.34px;top:363px;font-size:10.0px;line-height:15px;color:#000;transform:scaleX(0.9200);">0</div>
<div class="t s" style="left:1073.35px;top:252px;font-size:10.0px;line-height:15px;color:#000;transform:scaleX(0.9200);">-12</div>
<div class="t s" style="left:1073.35px;top:268px;font-size:10.0px;line-height:15px;color:#000;transform:scaleX(0.9200);">-24</div>
<div class="t s" style="left:1073.35px;top:284px;font-size:10.0px;line-height:15px;color:#000;transform:scaleX(0.9200);">-36</div>
<div class="t s" style="left:1073.35px;top:300px;font-size:10.0px;line-height:15px;color:#000;transform:scaleX(0.9200);">-48</div>
<div class="t s" style="left:1073.35px;top:316px;font-size:10.0px;line-height:15px;color:#000;transform:scaleX(0.9200);">-60</div>
<div class="t s" style="left:1073.35px;top:332px;font-size:10.0px;line-height:15px;color:#000;transform:scaleX(0.9200);">-72</div>
<div class="t s" style="left:1073.35px;top:348px;font-size:10.0px;line-height:15px;color:#000;transform:scaleX(0.9200);">-84</div>
<div class="t s" style="left:22.78px;top:393px;font-size:10.0px;line-height:15px;color:#000;transform:scaleX(0.9200);">70</div>
<div class="t s" style="left:22.78px;top:409px;font-size:10.0px;line-height:15px;color:#000;transform:scaleX(0.9200);">60</div>
<div class="t s" style="left:22.78px;top:425px;font-size:10.0px;line-height:15px;color:#000;transform:scaleX(0.9200);">50</div>
<div class="t s" style="left:22.78px;top:441px;font-size:10.0px;line-height:15px;color:#000;transform:scaleX(0.9200);">40</div>
<div class="t s" style="left:22.78px;top:457px;font-size:10.0px;line-height:15px;color:#000;transform:scaleX(0.9200);">30</div>
<div class="t s" style="left:22.78px;top:473px;font-size:10.0px;line-height:15px;color:#000;transform:scaleX(0.9200);">20</div>
<div class="t s" style="left:22.78px;top:489px;font-size:10.0px;line-height:15px;color:#000;transform:scaleX(0.9200);">10</div>
<div class="t s" style="left:25.34px;top:504px;font-size:10.0px;line-height:15px;color:#000;transform:scaleX(0.9200);">0</div>
<div class="t s" style="left:1074.88px;top:393px;font-size:10.0px;line-height:15px;color:#000;transform:scaleX(0.9200);">70</div>
<div class="t s" style="left:1074.88px;top:409px;font-size:10.0px;line-height:15px;color:#000;transform:scaleX(0.9200);">60</div>
<div class="t s" style="left:1074.88px;top:425px;font-size:10.0px;line-height:15px;color:#000;transform:scaleX(0.9200);">50</div>
<div class="t s" style="left:1074.88px;top:441px;font-size:10.0px;line-height:15px;color:#000;transform:scaleX(0.9200);">40</div>
<div class="t s" style="left:1074.88px;top:457px;font-size:10.0px;line-height:15px;color:#000;transform:scaleX(0.9200);">30</div>
<div class="t s" style="left:1074.88px;top:473px;font-size:10.0px;line-height:15px;color:#000;transform:scaleX(0.9200);">20</div>
<div class="t s" style="left:1074.88px;top:489px;font-size:10.0px;line-height:15px;color:#000;transform:scaleX(0.9200);">10</div>
<div class="t s" style="left:1077.44px;top:504px;font-size:10.0px;line-height:15px;color:#000;transform:scaleX(0.9200);">0</div>
<div class="cb" style="left:36px;top:541px"></div><div class="cb" style="left:83px;top:541px"></div>
<svg class="abs" style="left:36px;top:541px" width="13" height="13" viewBox="0 0 13 13"><path d="M3 6.2 L5.6 9.6 10.2 2.6" fill="none" stroke="#3a4f93" stroke-width="1.9" stroke-linejoin="miter"/></svg>
<svg class="abs" style="left:83px;top:541px" width="13" height="13" viewBox="0 0 13 13"><path d="M3 6.2 L5.6 9.6 10.2 2.6" fill="none" stroke="#3a4f93" stroke-width="1.9" stroke-linejoin="miter"/></svg>
<div class="rb" style="left:130px;top:542px"></div><div class="rb" style="left:197px;top:542px"></div>
<div class="abs" style="left:199.7px;top:544.7px;width:6.6px;height:6.6px;border-radius:50%;background:radial-gradient(circle at 45% 40%,#45b4ee 0,#2391d6 35%,#17436c 75%,#1b3550 100%)"></div>
<div class="t s" style="left:55.40px;top:539px;font-size:12px;line-height:18px;color:#000;transform:scaleX(0.8200);">RFI</div>
<div class="t s" style="left:101.40px;top:539px;font-size:12px;line-height:18px;color:#000;transform:scaleX(0.8200);">Grid</div>
<div class="t s" style="left:148.90px;top:539px;font-size:12px;line-height:18px;color:#000;transform:scaleX(0.8651);">256 Bins</div>
<div class="t s" style="left:215.90px;top:539px;font-size:12px;line-height:18px;color:#000;transform:scaleX(0.8651);">512 Bins</div>
<div class="t m" style="left:33.20px;top:565px;font-size:28.8px;line-height:37px;color:#5078e8;transform:scaleX(0.9600);letter-spacing:-2.9px;word-spacing:-3.7px;">LDS ANALYSER</div>
<div class="t s" style="left:591.50px;top:535px;font-size:13px;line-height:19px;color:#000;transform:scaleX(0.8200);">Data Rate</div>
<div class="cell" style="left:581px;top:553px"></div><div class="cell" style="left:581px;top:573px"></div>
<div class="t s" style="left:594.43px;top:556px;font-size:11px;line-height:16px;color:#000;transform:scaleX(0.8200);">1333 Kbps</div>
<div class="t s" style="left:591.93px;top:576px;font-size:11px;line-height:16px;color:#000;transform:scaleX(0.8200);">14074 Kbps</div>
<div class="t s" style="left:662.69px;top:535px;font-size:13px;line-height:19px;color:#000;transform:scaleX(0.8200);">Max Rate</div>
<div class="cell" style="left:651px;top:553px"></div><div class="cell" style="left:651px;top:573px"></div>
<div class="t s" style="left:664.43px;top:556px;font-size:11px;line-height:16px;color:#000;transform:scaleX(0.8200);">1476 Kbps</div>
<div class="t s" style="left:661.93px;top:576px;font-size:11px;line-height:16px;color:#000;transform:scaleX(0.8200);">16516 Kbps</div>
<div class="t s" style="left:743.66px;top:535px;font-size:13px;line-height:19px;color:#000;transform:scaleX(0.8200);">RCO</div>
<div class="cell" style="left:721px;top:553px"></div><div class="cell" style="left:721px;top:573px"></div>
<div class="t s" style="left:741.96px;top:556px;font-size:11px;line-height:16px;color:#000;transform:scaleX(0.8200);">90.3 %</div>
<div class="t s" style="left:741.96px;top:576px;font-size:11px;line-height:16px;color:#000;transform:scaleX(0.8200);">85.2 %</div>
<div class="t s" style="left:794.10px;top:535px;font-size:13px;line-height:19px;color:#000;transform:scaleX(0.8200);">Noise Margin</div>
<div class="cell" style="left:791px;top:553px"></div><div class="cell" style="left:791px;top:573px"></div>
<div class="t s" style="left:816.72px;top:556px;font-size:11px;line-height:16px;color:#000;transform:scaleX(0.8200);">6 dB</div>
<div class="t s" style="left:812.96px;top:576px;font-size:11px;line-height:16px;color:#000;transform:scaleX(0.8200);">6.2 dB</div>
<div class="t s" style="left:882.27px;top:535px;font-size:13px;line-height:19px;color:#000;transform:scaleX(0.8200);">LATN</div>
<div class="cell" style="left:861px;top:553px"></div><div class="cell" style="left:861px;top:573px"></div>
<div class="t s" style="left:882.96px;top:556px;font-size:11px;line-height:16px;color:#000;transform:scaleX(0.8200);">5.2 dB</div>
<div class="t s" style="left:884.21px;top:576px;font-size:11px;line-height:16px;color:#000;transform:scaleX(0.8200);">17 dB</div>
<div class="t s" style="left:951.68px;top:535px;font-size:13px;line-height:19px;color:#000;transform:scaleX(0.8200);">SATN</div>
<div class="cell" style="left:931px;top:553px"></div><div class="cell" style="left:931px;top:573px"></div>
<div class="t s" style="left:947.94px;top:556px;font-size:11px;line-height:16px;color:#000;transform:scaleX(0.8200);">947.2 dB</div>
<div class="t s" style="left:954.21px;top:576px;font-size:11px;line-height:16px;color:#000;transform:scaleX(0.8200);">17 dB</div>
<div class="t s" style="left:1012.10px;top:535px;font-size:13px;line-height:19px;color:#000;transform:scaleX(0.8200);">TX Power</div>
<div class="cell" style="left:1001px;top:553px"></div><div class="cell" style="left:1001px;top:573px"></div>
<div class="t s" style="left:1019.20px;top:556px;font-size:11px;line-height:16px;color:#000;transform:scaleX(0.8200);">9.3 dBm</div>
<div class="t s" style="left:1016.70px;top:576px;font-size:11px;line-height:16px;color:#000;transform:scaleX(0.8200);">25.6 dBm</div>
<div class="t s" style="left:558.40px;top:555px;font-size:12.5px;line-height:18px;color:#000;transform:scaleX(0.8450);">US:</div>
<div class="t s" style="left:558.40px;top:576px;font-size:12.5px;line-height:18px;color:#000;transform:scaleX(0.8450);">DS:</div>
</body></html>
